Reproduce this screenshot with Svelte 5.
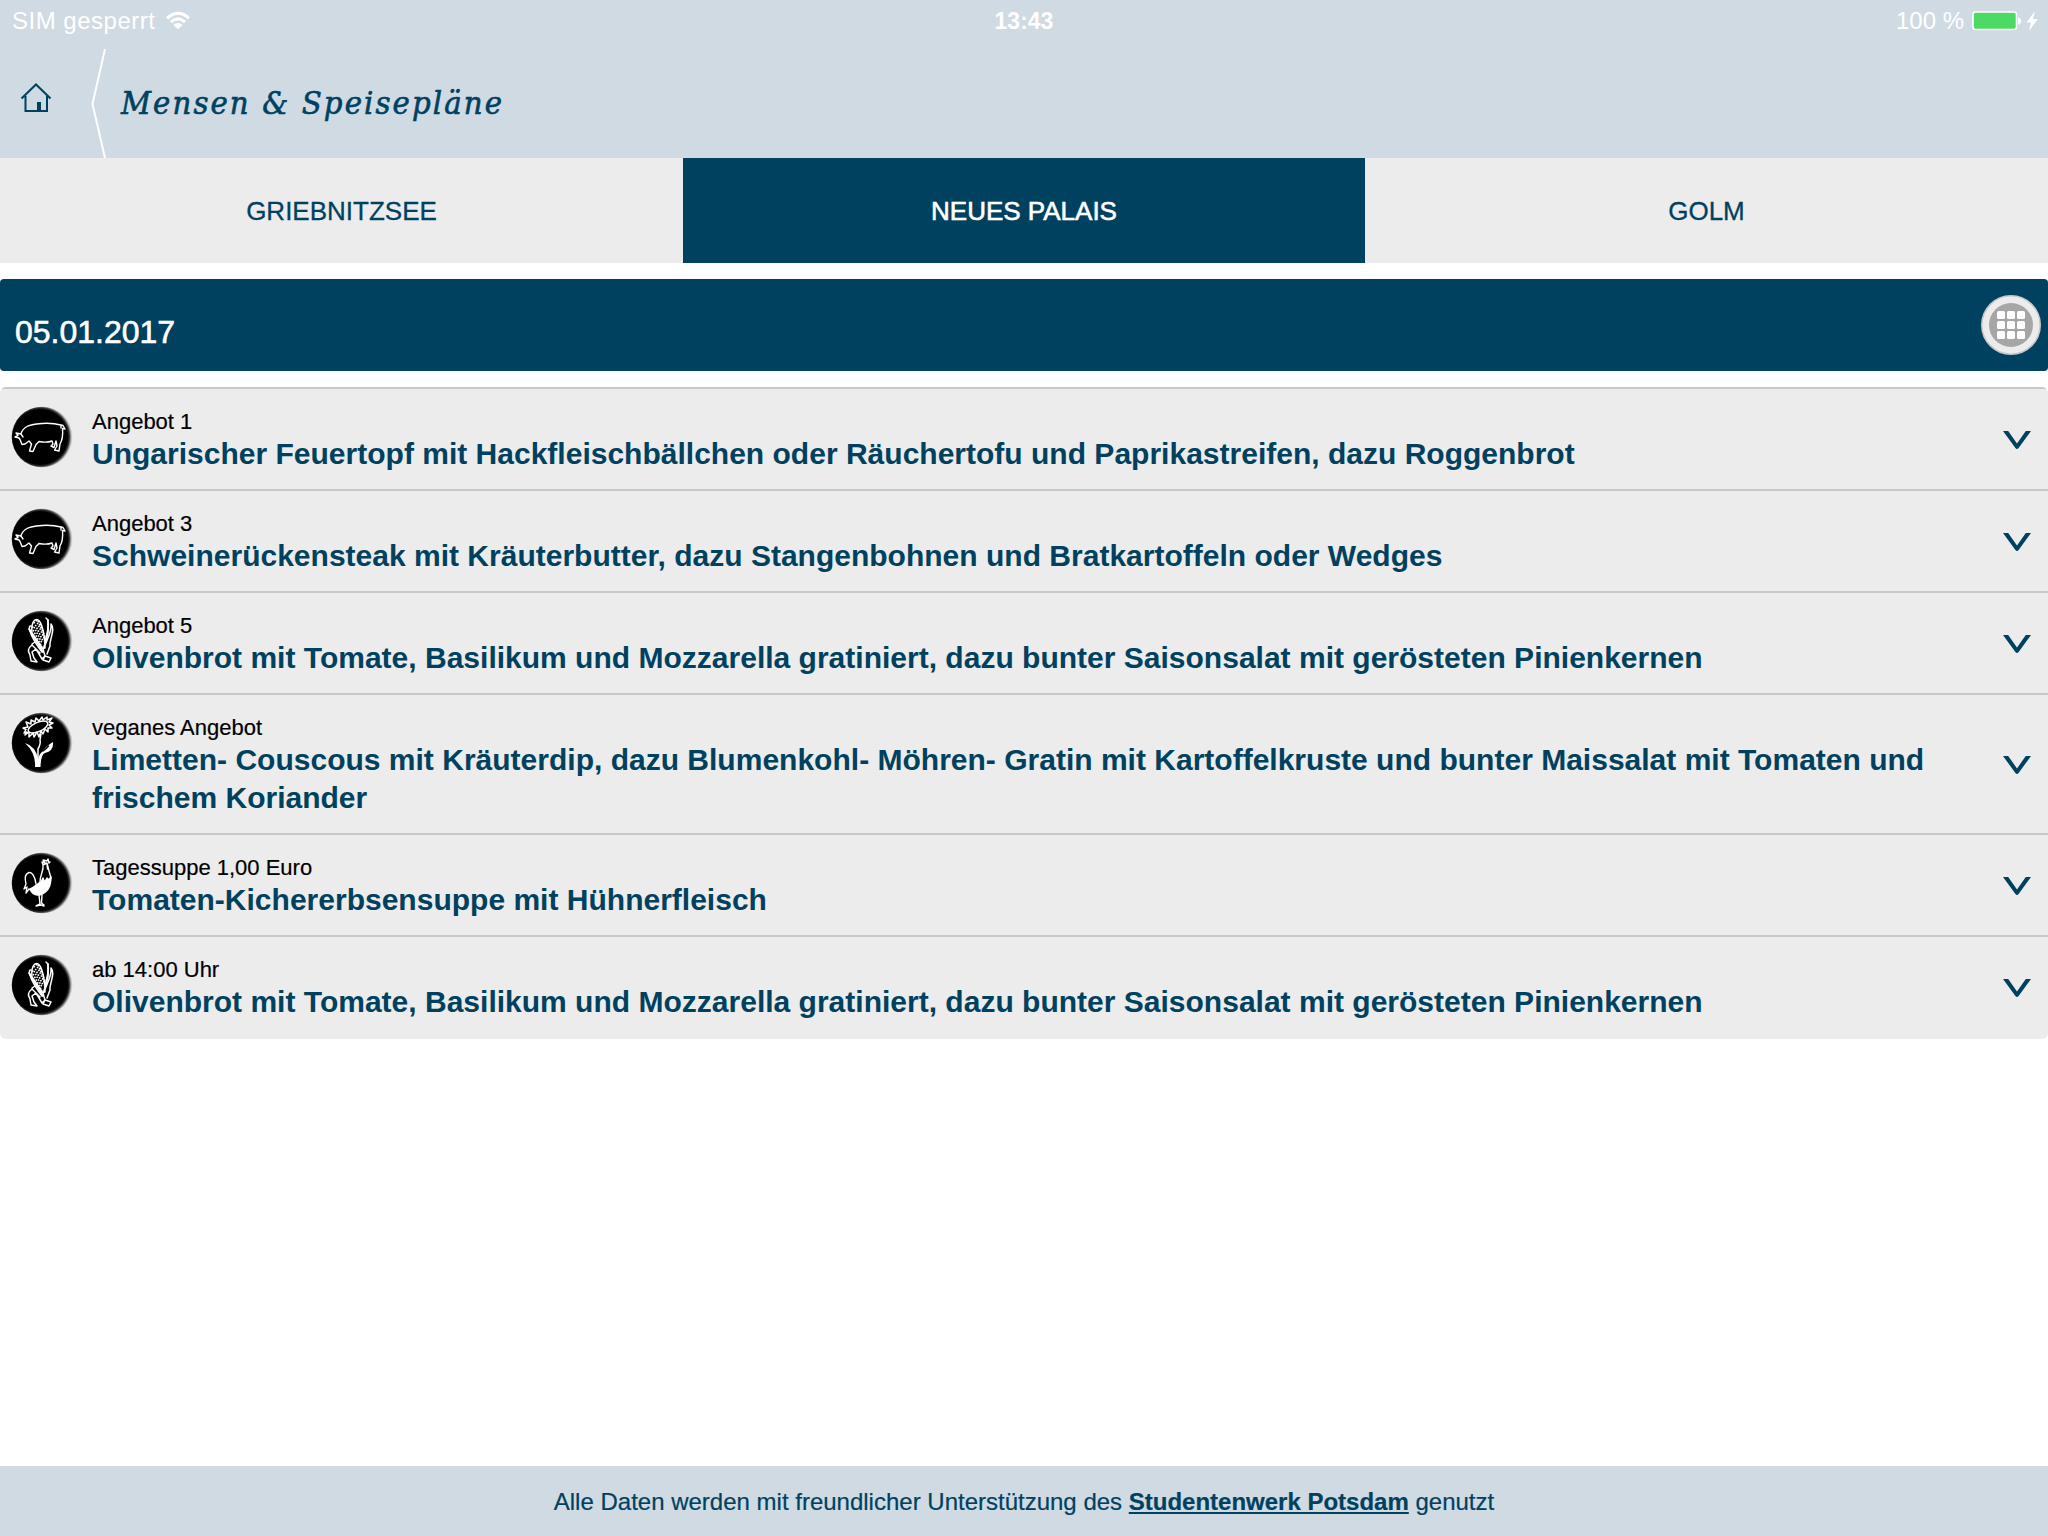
<script>
  const meals = [
    { icon: 'pig', label: 'Angebot 1', title: 'Ungarischer Feuertopf mit Hackfleischbällchen oder Räuchertofu und Paprikastreifen, dazu Roggenbrot' },
    { icon: 'pig', label: 'Angebot 3', title: 'Schweinerückensteak mit Kräuterbutter, dazu Stangenbohnen und Bratkartoffeln oder Wedges' },
    { icon: 'corn', label: 'Angebot 5', title: 'Olivenbrot mit Tomate, Basilikum und Mozzarella gratiniert, dazu bunter Saisonsalat mit gerösteten Pinienkernen' },
    { icon: 'flower', label: 'veganes Angebot', title: 'Limetten- Couscous mit Kräuterdip, dazu Blumenkohl- Möhren- Gratin mit Kartoffelkruste und bunter Maissalat mit Tomaten und frischem Koriander' },
    { icon: 'rooster', label: 'Tagessuppe 1,00 Euro', title: 'Tomaten-Kichererbsensuppe mit Hühnerfleisch' },
    { icon: 'corn', label: 'ab 14:00 Uhr', title: 'Olivenbrot mit Tomate, Basilikum und Mozzarella gratiniert, dazu bunter Saisonsalat mit gerösteten Pinienkernen' }
  ];
  const tabs = ['GRIEBNITZSEE', 'NEUES PALAIS', 'GOLM'];
  const active = 1;
</script>

<div class="page">
  <header>
    <div class="status">
      <div class="carrier">
        <span>SIM gesperrt</span>
        <svg width="26" height="20" viewBox="0 0 26 20">
          <g fill="none" stroke="#fff" stroke-width="3.2">
            <path d="M2 7.2Q13 -2.6 24 7.2" />
            <path d="M5.8 11Q13 4.6 20.2 11" />
          </g>
          <path d="M8.4 13.8Q13 10.4 17.6 13.8L13 18.5Z" fill="#fff" />
        </svg>
      </div>
      <span class="time">13:43</span>
      <div class="power">
        <span>100 %</span>
        <svg width="68" height="22" viewBox="0 0 68 22">
          <rect x="1" y="2" width="43.5" height="17.5" rx="2.5" fill="#4cd964" stroke="#fff" stroke-width="1.6" />
          <path d="M46.2 7.2Q49 8 49 11T46.2 14.8Z" fill="#fff" />
          <path d="M63 1L54.5 12.5H59L57 21L66 9H61Z" fill="#fff" />
        </svg>
      </div>
    </div>
    <div class="bar">
      <svg class="home" width="32" height="32" viewBox="0 0 32 32" fill="none" stroke="#00415f" stroke-width="2">
        <path d="M1.5 16.5L16 2.5L30.5 16.5M5.5 14V29H27V14" />
        <path d="M17 20H21V29H17Z" fill="#00415f" stroke="none" />
      </svg>
      <svg class="divider" width="16" height="109" viewBox="0 0 16 109" fill="none" stroke="#fff" stroke-width="2">
        <path d="M14 0L1.5 55L14 109" />
      </svg>
      <h1>Mensen &amp; Speisepläne</h1>
    </div>
  </header>

  <nav>
    {#each tabs as tab, i}
      <button class:active={i === active}>{tab}</button>
    {/each}
  </nav>

  <section class="date">
    <span>05.01.2017</span>
    <svg width="60" height="60" viewBox="0 0 60 60">
      <circle cx="30" cy="30" r="29.2" fill="#ececec" stroke="#c8c8c8" stroke-width="1.6" />
      <circle cx="30" cy="30" r="22" fill="#a6a6a6" />
      {#each [16, 26, 36] as y}
        {#each [16, 26, 36] as x}
          <rect {x} {y} width="8" height="8" rx="1.5" fill="#fff" />
        {/each}
      {/each}
    </svg>
  </section>

  <ul>
    {#each meals as meal}
      <li>
        <svg class="badge" width="62" height="62" viewBox="0 0 62 62">
          <defs>
            <radialGradient id="rim" cx="0.47" cy="0.5" r="0.52">
              <stop offset="0.87" stop-color="#000" />
              <stop offset="0.93" stop-color="#3a3a3a" />
              <stop offset="1" stop-color="#aaa" stop-opacity="0.5" />
            </radialGradient>
          </defs>
          <circle cx="31" cy="31" r="30.3" fill="url(#rim)" />
          <g fill="none" stroke="#fff" stroke-width="1.4" stroke-linejoin="round" stroke-linecap="round">
            {#if meal.icon === 'pig'}
              <path d="M50 19C44 17.5 38 17 31 17.5C25 18 19 18.5 16 20.5C12 23 10.5 25 10 28L5 27L7 29.5L4 31L8 32L9 33.5L11 38.5L14 38L18 35L20.5 38L18.5 45L22 45.5L25 38.5L28 35.5C33 36.5 37 36.5 41 35L42 38L40 40L43 41.5L45 35L46 40L43.5 44L48 45L49 38C52 33 52 28 51.5 22.5L54 23L52 19.5L50 19L50 22M10 28L12 31" />
            {:else if meal.icon === 'corn'}
              <path stroke-width="1.5" d="M32 39L21 23C20 14 23 8 27 10C31 12 34 26 34 38M22 17C15 12 18 25 31 42M35 8C40 12 36 22 33 38C36 29 41 22 40 14C45 19 38 30 39 36L36 44M29 43L21 35C17 38 17 42 19 45L20 51L26 52L23 48L21 42L25 39L31 49L34 46L32 39M34 46L40 48L38 52L32 50ZM21 34L24 32" />
              <path stroke-width="1.6" stroke-dasharray="1.6 1.5" stroke-linecap="butt" d="M23 12L32 31M25 10L34 30M23 17L31 33M27 11L33 24M22 20L31 37M29 14L34 27" />
              <path stroke-width="1.8" d="M18 19L32 42M37 10L37 22L33 38" />
            {:else if meal.icon === 'flower'}
              <ellipse cx="27" cy="15" rx="10.5" ry="4.6" transform="rotate(-24 27 15)" />
              <path stroke-width="1.5" d="M16 20L13 21L15 17.5L12 16L17 15L15 10L20 12L20 8L24 10L25 6L28 9L31 5L32 8L36 5L36 8L41 6L38 10L42 11L38 13L41 16L37 16L37 20L34 17L32 22L30 19L28 25L26 20L23 25L22 21L18 25L18 20L14 23Z" />
              <path stroke-width="1.5" d="M30 22L29 28Q30 32 27 37L27 46" />
              <path fill="#fff" stroke="none" d="M14 31Q24 34 27.5 47Q28 42 31 40Q35 34 42 30Q43 39 34 41Q30 42 29.5 55H24Q25 41 14 31Z" />
              <path stroke="#000" d="M32 39Q35 37 37.5 34" />
            {:else}
              <path fill="#fff" d="M19 37C24 35 27 31 30 30L32 26L33.5 30L36 26L37.5 28L40 25C40 33 37 40 30 42.5C25 44 21 42 19 37Z" />
              <path stroke-width="1.4" d="M25 32C24 24 21 20 18 20.5C13 22 14 28 15 32L13 37L16 35L15 41L18 37L21 39M29 30C29 22 33 19 32 13L36 11L37 15L38 19L40 26M32 13L31 10L34 11L32 8L36 9L37 7L38 11L39 10M36 13L36.5 17M28 43L29 52L25 54L30 53L33 54M31 43L30.5 51L33 53" />
            {/if}
          </g>
        </svg>
        <div class="text">
          <div class="label">{meal.label}</div>
          <div class="title">{meal.title}</div>
        </div>
        <svg class="chevron" width="30" height="20" viewBox="0 0 30 20">
          <path d="M1 1H6.2L15 13.4L23.8 1H29L16.6 18Q15 20 13.4 18Z" fill="#00415f" />
        </svg>
      </li>
    {/each}
  </ul>

  <footer>
    <p>Alle Daten werden mit freundlicher Unterstützung des <a href="#studentenwerk">Studentenwerk Potsdam</a> genutzt</p>
  </footer>
</div>

<style>
  :global(body) { margin: 0; background: #fff; }
  .page {
    display: flex;
    flex-direction: column;
    width: 2048px;
    height: 1536px;
    overflow: hidden;
    font-family: "Liberation Sans", Arial, sans-serif;
    color: #00415f;
  }
  header { height: 158px; background: #cfdae3; }
  .status {
    display: grid;
    grid-template-columns: 1fr auto 1fr;
    align-items: center;
    height: 40px;
    padding: 0 8px 0 12px;
    color: #fff;
    font-size: 24px;
    line-height: 42px;
  }
  .carrier, .power { display: flex; align-items: center; gap: 10px; letter-spacing: 0.5px; }
  .power { justify-content: flex-end; gap: 8px; letter-spacing: 0; }
  .time { margin-right: 4px; font-weight: bold; font-size: 23px; }
  .bar { display: flex; height: 118px; }
  .home { margin: 42px 0 0 20px; }
  .divider { margin: 9px 0 0 39px; }
  h1 {
    margin: 0 0 0 14px;
    font: italic 32.5px/126px "DejaVu Serif Condensed", "DejaVu Serif", serif;
    letter-spacing: 2.1px;
    -webkit-text-stroke: 0.6px #00415f;
  }
  nav { display: grid; grid-template-columns: 683px 682px 683px; height: 105px; }
  button {
    border: 0;
    padding: 1px 0 0;
    background: #ececec;
    color: #00415f;
    font: 26px/104px "Liberation Sans", Arial, sans-serif;
    -webkit-text-stroke: 0.3px #00415f;
  }
  button.active { background: #00415f; color: #fff; -webkit-text-stroke: 0.6px #fff; }
  .date {
    display: flex;
    justify-content: space-between;
    align-items: center;
    box-sizing: border-box;
    height: 92px;
    margin: 16px 0;
    padding: 0 7px 0 15px;
    border-radius: 4px;
    background: #00415f;
    color: #fff;
    font-size: 32px;
  }
  .date span { padding-top: 14px; -webkit-text-stroke: 0.6px #fff; }
  ul {
    margin: 0;
    padding: 0;
    list-style: none;
    border-bottom: 2px solid #ececec;
    border-radius: 6px;
    background: #ececec;
    overflow: hidden;
  }
  li { display: flex; border-top: 2px solid #c8c8c8; padding-left: 11px; }
  .badge { flex: none; margin-top: 17px; }
  .text { flex: 1; padding: 20px 72px 16px 19px; }
  .label { height: 26px; font-size: 22px; line-height: 26px; color: #000; -webkit-text-stroke: 0.2px #000; }
  .title { font-size: 30.02px; line-height: 38px; font-weight: bold; }
  .chevron { flex: none; align-self: center; margin: 2px 16px 0 0; }
  footer {
    margin-top: auto;
    height: 70px;
    background: #cfdae3;
    text-align: center;
  }
  p { margin: 0; font-size: 24px; line-height: 72px; -webkit-text-stroke: 0.2px #00415f; }
  a { color: inherit; font-weight: bold; }
</style>
